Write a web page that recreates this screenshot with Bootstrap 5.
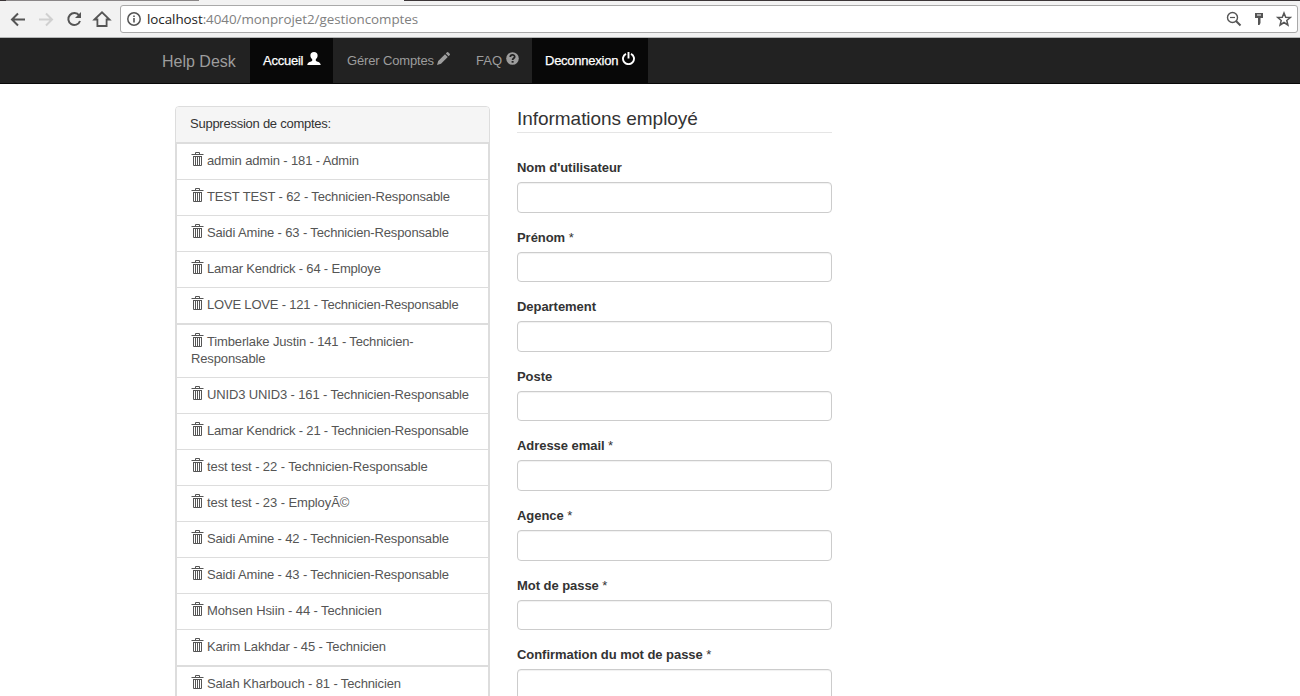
<!DOCTYPE html>
<html lang="fr">
<head>
<meta charset="utf-8">
<meta name="viewport" content="width=device-width, initial-scale=1">
<title>Help Desk</title>
<link href="https://cdn.jsdelivr.net/npm/bootstrap@5.3.0/dist/css/bootstrap.min.css" rel="stylesheet">
<style>
body{font:13px/17px "Liberation Sans",Arial,sans-serif;color:#333;background:#fff;height:696px;overflow:hidden}
.toolbar{height:37px;background:#f2f2f2;border-bottom:1px solid #b4b6b6;padding:4px 2px 0 9px}
.tabline{height:1px;background:linear-gradient(90deg,#3b3537 0 6px,#8a8687 6px 199px,#f2f2f2 199px 404px,#3b3537 404px)}
.address{height:28px;margin-left:8px;padding:0 5px 0 6px;background:#fff;border:1px solid #a9a9a9;border-radius:3px;font:13.4px/26px "Open Sans","Noto Sans",sans-serif;color:#808080}
.address b{font-weight:400;color:#222}
.url{margin-left:6px;letter-spacing:-.05px}
.topnav{height:46px;background:#222;border-bottom:1px solid #080808;padding:0 0 0 162px}
.topnav .navbar-brand{font-size:16px;color:#9d9d9d;width:88px;padding:0;margin:0;line-height:48px;height:45px}
.topnav .nav-link{color:#9d9d9d;padding:0 13px;height:46px;line-height:45px;white-space:nowrap}
.topnav .nav-link.active{background:#080808;color:#fff;letter-spacing:-.25px;-webkit-text-stroke:.25px #fff}
.glyph{width:13px;height:13px;fill:currentColor;vertical-align:0}
.content{padding:22px 0 0 175px}
.accounts{width:315px;border-radius:4px 4px 0 0;border:1px solid #ddd}
.accounts .card-header{height:36px;padding:8px 14px;background:#f5f5f5;border:0;border-bottom:1px solid #ddd;border-radius:3px 3px 0 0;color:#333;letter-spacing:-.25px}
.accounts .card-header + .list-group{border:1px solid #ddd;border-radius:0}
.accounts .list-group-item{min-height:36px;padding:8px 14px 10px;color:#555;border:0;border-bottom:1px solid #ddd;font-size:13px;line-height:17px;letter-spacing:-.14px}
.accounts .list-group-item.thick{border-bottom-width:2px}
.accounts .list-group-item.tight{letter-spacing:-.19px}
.accounts .list-group-item.loose{letter-spacing:-.1px}
.trash{width:13px;height:14px;margin-right:3px;vertical-align:-1px}
.infos{width:315px;margin-left:27px}
.infos legend{font-size:19px;line-height:26px;height:27px;border-bottom:1px solid #e5e5e5;margin-bottom:26px;color:#333;float:none;letter-spacing:-.04px}
.infos .field{height:69.6px}
.infos .form-label{display:block;height:23px;margin:0;font-size:13px;line-height:17px;color:#333;letter-spacing:-.05px}
.infos .form-control{height:30.6px;border:1px solid #ccc;border-radius:4px;box-shadow:inset 0 1px 1px rgba(0,0,0,.06)}
</style>
</head>
<body>
<div class="tabline"></div>
<div class="toolbar d-flex">
  <svg width="103" height="28" viewBox="0 0 103 28" fill="none" stroke="#555" stroke-width="2" class="flex-shrink-0">
    <path d="M16 14.500H3M9 8.500l-6 6 6 6"/>
    <path stroke="#d0d0d0" d="M30 14.500h13M37 8.500l6 6-6 6"/>
    <path d="M70.200 10.500A6 6 0 1 0 71 16"/><path d="M72 7v6h-6z" fill="#555" stroke="none"/>
    <path stroke-width="1.800" d="M85.500 14.500 93 7.300l7.500 7.200H97.600V21H88.400V14.500z"/>
  </svg>
  <div class="address d-flex flex-grow-1 align-items-center">
    <svg width="14" height="14" viewBox="0 0 14 14" class="flex-shrink-0"><circle cx="7" cy="7" r="6.200" fill="none" stroke="#555" stroke-width="1.500"/><path fill="#555" d="M6.200 6h1.600v4.500H6.200zM6.200 3.500h1.600V5H6.200z"/></svg>
    <span class="url"><b>localhost</b>:4040/monprojet2/gestioncomptes</span>
    <svg class="ms-auto flex-shrink-0" width="66" height="18" viewBox="0 0 66 18" fill="none" stroke="#555">
      <circle cx="6.500" cy="7.500" r="5" stroke-width="1.400"/><path stroke-width="1.200" d="M4 7.500h5"/><path stroke-width="2" d="M10 11l4.500 4.500"/>
      <path fill="#555" stroke="none" d="M29 3h8v5h-2.500v5l-1 2H32V8H29z"/><path stroke="#fff" d="M31 5h4"/>
      <path stroke-width="1.500" d="M58 3l1.700 4.200 4.600.3-3.500 3 1.100 4.500-3.900-2.500-3.900 2.500 1.100-4.500-3.500-3 4.600-.3z"/>
    </svg>
  </div>
</div>
<nav class="topnav d-flex align-items-start">
  <a class="navbar-brand" href="#">Help Desk</a>
  <ul class="nav flex-nowrap">
    <li class="nav-item"><a class="nav-link active" style="width:83px" href="#">Accueil <svg class="glyph" style="width:14px" viewBox="0 0 14 13"><path d="M7 0C4.700 0 3.300 1.500 3.400 3.500c0 1.800.9 3 1.800 3.800v1.500C4.500 9.800.3 10 .3 13h13.400c0-3-4.200-3.200-4.900-4.200V7.300c.9-.8 1.800-2 1.800-3.800C10.700 1.500 9.300 0 7 0z"/></svg></a></li>
    <li class="nav-item"><a class="nav-link" style="width:130px;padding-left:14px;letter-spacing:-.15px" href="#">Gérer Comptes <svg class="glyph" viewBox="0 0 13 13"><path d="M0 13l1.200-4L8 2.200 10.800 5 4 11.800zM8.800 1.400 10 .2q.6-.4 1.200.1l1.500 1.500q.5.600.1 1.200L11.600 4.200z"/></svg></a></li>
    <li class="nav-item"><a class="nav-link" style="width:69px" href="#">FAQ <svg class="glyph" viewBox="0 0 13 13"><circle cx="6.500" cy="6.500" r="6.300"/><path d="M4.300 5C4.300 2.200 8.700 2.200 8.700 4.800 8.700 6.300 6.600 6.300 6.600 8" fill="none" stroke="#222" stroke-width="1.800"/><path fill="#222" d="M5.600 9h2v1.700h-2z"/></svg></a></li>
    <li class="nav-item"><a class="nav-link active" style="width:116px" href="#">Deconnexion <svg class="glyph" viewBox="0 0 13 13"><path d="M4 1.800a5.500 5.500 0 1 0 5 0M6.500 0v6.500" fill="none" stroke="currentColor" stroke-width="1.900"/></svg></a></li>
  </ul>
</nav>
<svg width="0" height="0" class="d-none"><symbol id="trash" viewBox="0 0 13 14"><path d="M4.500 2.500V.5h4v2M.5 2.500h12M2.500 4v9.500h8V4M2 4.500h9M4.500 5v8M6.500 5v8M8.500 5v8" fill="none" stroke="#555"/></symbol></svg>
<main class="content d-flex align-items-start">
  <section class="card accounts">
    <div class="card-header">Suppression de comptes:</div>
    <ul class="list-group" id="accounts"></ul>
  </section>
  <form class="infos">
    <legend>Informations employé</legend>
    <div id="fields"></div>
  </form>
</main>
<script>
const accounts=[["admin admin - 181 - Admin"],["TEST TEST - 62 - Technicien-Responsable"],["Saidi Amine - 63 - Technicien-Responsable"],["Lamar Kendrick - 64 - Employe","tight"],["LOVE LOVE - 121 - Technicien-Responsable","tight thick"],["Timberlake Justin - 141 - Technicien-Responsable"],["UNID3 UNID3 - 161 - Technicien-Responsable"],["Lamar Kendrick - 21 - Technicien-Responsable","tight"],["test test - 22 - Technicien-Responsable","loose"],["test test - 23 - EmployÃ©","loose"],["Saidi Amine - 42 - Technicien-Responsable"],["Saidi Amine - 43 - Technicien-Responsable"],["Mohsen Hsiin - 44 - Technicien","loose"],["Karim Lakhdar - 45 - Technicien","thick"],["Salah Kharbouch - 81 - Technicien"]];
document.getElementById("accounts").innerHTML=accounts.map(([name,look=""])=>`<li class="list-group-item ${look}"><svg class="trash"><use href="#trash"/></svg>${name}</li>`).join("");
const fields=["Nom d'utilisateur","Prénom *","Departement","Poste","Adresse email *","Agence *","Mot de passe *","Confirmation du mot de passe *"];
document.getElementById("fields").innerHTML=fields.map((f,i)=>`<div class="field"><label class="form-label" for="f${i}"><b>${f.replace(" *","")}</b>${f.includes("*")?" *":""}</label><input class="form-control" id="f${i}"></div>`).join("");
</script>
<script src="https://cdn.jsdelivr.net/npm/bootstrap@5.3.0/dist/js/bootstrap.bundle.min.js"></script>
</body>
</html>
